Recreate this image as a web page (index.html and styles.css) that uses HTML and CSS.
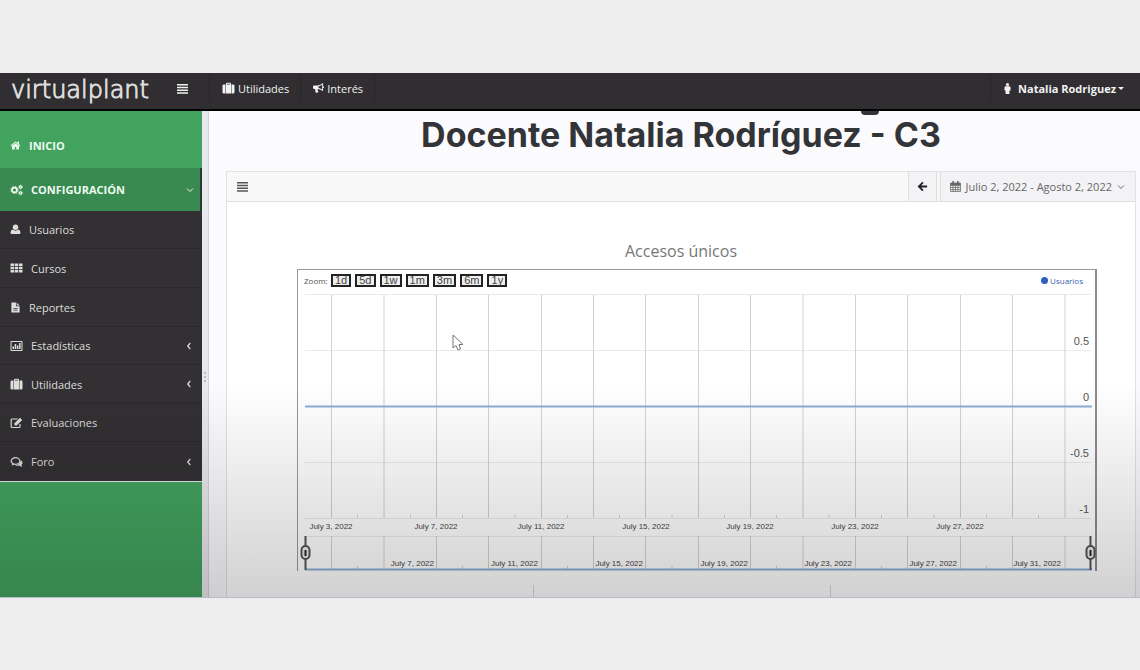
FILE: index.html
```html
<!DOCTYPE html>
<html lang="es">
<head>
<meta charset="utf-8">
<title>Virtualplant</title>
<link rel="stylesheet" href="styles.css">
</head>
<body>
<svg class="defs" aria-hidden="true">
  <symbol id="bars" viewBox="0 0 12 12"><path d="M0 1h12v1.600H0zM0 4h12v1.600H0zM0 7h12v1.600H0zM0 10h12v1.600H0z"/></symbol>
  <symbol id="case" viewBox="0 0 12 12"><path d="M3.500 2.500V1.700Q3.500.7 4.500.7h3q1 0 1 1v.8H9v9H3v-9zm1 0h3v-.8h-3zM2.500 2.500v9H1.300Q0 11.500 0 10.200V3.800Q0 2.500 1.300 2.500zM9.500 2.500h1.200q1.300 0 1.300 1.300v6.400q0 1.300-1.300 1.300H9.500z"/></symbol>
  <symbol id="horn" viewBox="0 0 12 12"><path d="M11 0v3.500q1 0 1 1t-1 1V9Q8.500 6.800 5.500 6.500q-1 .6-.3 1.500-.4.700.8 1.700-.3.900-1.700.9-1.500 0-1.500-.5-.6-1.800-.3-3.600H1.300Q0 6.500 0 5.200V4Q0 2.700 1.300 2.700H5Q8 2.700 11 0zm-1 2Q8 3.500 6 3.700v1.800q2 .2 4 1.700z" fill-rule="evenodd"/></symbol>
  <symbol id="male" viewBox="0 0 12 12"><circle cx="6" cy="1.700" r="1.700"/><path d="M4.200 3.600h3.600q1.500 0 1.500 1.500v3H8.100V12H3.900V8.100H2.700v-3q0-1.500 1.500-1.500z"/></symbol>
  <symbol id="home" viewBox="0 0 1792 1792"><path d="M1472 992v480q0 26-19 45t-45 19h-384v-384h-256v384h-384q-26 0-45-19t-19-45v-480q0-1 .5-3t.5-3l575-474 575 474q1 2 1 6zm223-69l-62 74q-8 9-21 11h-3q-13 0-21-7l-692-577-692 577q-12 8-24 7-13-2-21-11l-62-74q-8-10-7-23.500t11-21.500l719-599q32-26 76-26t76 26l244 204v-195q0-14 9-23t23-9h192q14 0 23 9t9 23v408l219 182q10 8 11 21.500t-7 23.500z"/></symbol>
  <symbol id="gears" viewBox="0 0 12 12"><g fill="none" stroke="currentColor"><circle cx="4" cy="6" r="2.400" stroke-width="1.700"/><circle cx="4" cy="6" r="3.600" stroke-width="1" stroke-dasharray="1.400 1.430"/><circle cx="10" cy="3" r="1.200" stroke-width="1.200"/><circle cx="10" cy="9" r="1.200" stroke-width="1.200"/><circle cx="10" cy="3" r="2" stroke-width=".6" stroke-dasharray="1 1"/><circle cx="10" cy="9" r="2" stroke-width=".6" stroke-dasharray="1 1"/></g></symbol>
  <symbol id="user" viewBox="0 0 12 12"><circle cx="6" cy="3.500" r="3"/><path d="M3 6Q6 8.500 9 6q2.500.5 2.500 3.500 0 1.500-1.500 1.500H2Q.5 11 .5 9.500.5 6.500 3 6z"/></symbol>
  <symbol id="grid" viewBox="0 0 12 12"><path d="M0 1.500h3.500V4H0zM4.200 1.500h3.500V4H4.200zM8.500 1.500H12V4H8.500zM0 4.800h3.500v2.500H0zM4.200 4.800h3.500v2.500H4.200zM8.500 4.800H12v2.500H8.500zM0 8h3.500v2.500H0zM4.200 8h3.500v2.500H4.200zM8.500 8H12v2.500H8.500z"/></symbol>
  <symbol id="file" viewBox="0 0 12 12"><path fill-rule="evenodd" d="M1.500.5h5v4H10.500v7h-9zm5.800 0L10.500 3.700H7.300zM3.700 6.500v.8h4.600v-.8zm0 2v.8h4.600v-.8z"/></symbol>
  <symbol id="chart" viewBox="0 0 12 12"><path fill-rule="evenodd" d="M.8 1h10.400q.8 0 .8.800v8.400q0 .8-.8.800H.8q-.8 0-.8-.8V1.800Q0 1 .8 1zM1 2v8h10V2zm1 4.500h1.500V9H2zM4.200 4h1.500v5H4.200zM6.400 5.500h1.500V9H6.400zM8.600 3h1.500v6H8.600z"/></symbol>
  <symbol id="edit" viewBox="0 0 12 12"><path d="M9.500 7v2.500q0 1-1 1H1.700q-1 0-1-1V3q0-1 1-1h5.500" fill="none" stroke="currentColor" stroke-width="1.200"/><path d="M4 8.500V6.200L9.500.8l2.200 2.300L6.200 8.500z"/></symbol>
  <symbol id="chat" viewBox="0 0 12 12"><ellipse cx="5" cy="5" rx="4.300" ry="3.300" fill="none" stroke="currentColor" stroke-width="1.200"/><path d="M2 7.500 1 9.700 4 8.500zM10.300 4q1.700 1.400 1.700 2.700 0 1.200-1 2 .1 1.300.8 2-1.700 0-2.600-1-2.500.5-4.500-.7 5.200 0 5.600-5z"/></symbol>
  <symbol id="down" viewBox="0 0 8 8"><path d="M1 2.500 4 5.500l3-3" fill="none" stroke="currentColor"/></symbol>
  <symbol id="left" viewBox="0 0 8 8"><path d="M5.300 1 2.700 4l2.600 3" fill="none" stroke="currentColor" stroke-width="1.200"/></symbol>
  <symbol id="back" viewBox="0 0 12 12"><path d="M6.500 1.500 2 6l4.500 4.500M2.500 6H11" fill="none" stroke="currentColor" stroke-width="2"/></symbol>
  <symbol id="cal" viewBox="0 0 12 12"><path d="M.5 2.500h11v9H.5zM.5 5h11M.5 7.200h11M.5 9.400h11M3.300 5v6.500M6 5v6.500M8.700 5v6.500" fill="none" stroke="currentColor" stroke-width=".8"/><path d="M.5 2h11v2.500H.5zM2.500 0h1.700v3H2.500zM7.800 0h1.700v3H7.800z"/></symbol>
</svg>
<div class="app">
  <header class="topbar">
    <div class="brand">
      <span class="logo">virtualplant</span>
      <button class="menu-btn" aria-label="Menú"><svg class="icon"><use href="#bars"/></svg></button>
    </div>
    <nav class="topnav">
      <a href="#"><svg class="icon wide"><use href="#case"/></svg>Utilidades</a>
      <a href="#"><svg class="icon"><use href="#horn"/></svg>Interés</a>
    </nav>
    <button class="account"><svg class="icon"><use href="#male"/></svg>Natalia Rodriguez<span class="caret"></span></button>
  </header>
  <div class="columns">
    <nav class="sidebar">
      <a class="primary home" href="#"><svg class="icon"><use href="#home"/></svg>INICIO</a>
      <a class="primary active" href="#"><svg class="icon wide"><use href="#gears"/></svg>CONFIGURACIÓN<svg class="arrow"><use href="#down"/></svg></a>
      <div class="submenu">
        <a href="#"><svg class="icon"><use href="#user"/></svg>Usuarios</a>
        <a href="#"><svg class="icon wide"><use href="#grid"/></svg>Cursos</a>
        <a href="#"><svg class="icon"><use href="#file"/></svg>Reportes</a>
        <a href="#"><svg class="icon wide"><use href="#chart"/></svg>Estadísticas<svg class="arrow"><use href="#left"/></svg></a>
        <a href="#"><svg class="icon wide"><use href="#case"/></svg>Utilidades<svg class="arrow"><use href="#left"/></svg></a>
        <a href="#"><svg class="icon wide"><use href="#edit"/></svg>Evaluaciones</a>
        <a href="#"><svg class="icon wide"><use href="#chat"/></svg>Foro<svg class="arrow"><use href="#left"/></svg></a>
      </div>
    </nav>
    <div class="splitter"><i></i><i></i><i></i></div>
    <main class="main">
      <span class="descender"></span>
      <h1>Docente Natalia Rodríguez - C3</h1>
      <section class="panel">
        <div class="toolbar">
          <button class="list-btn" aria-label="Opciones"><svg class="icon"><use href="#bars"/></svg></button>
          <button class="back-btn" aria-label="Volver"><svg class="icon"><use href="#back"/></svg></button>
          <button class="range-btn"><svg class="icon"><use href="#cal"/></svg>Julio 2, 2022 - Agosto 2, 2022<svg class="arrow"><use href="#down"/></svg></button>
        </div>
        <h2>Accesos únicos</h2>
        <div class="chart">
          <div class="chart-head">
            <span class="zoom">Zoom:</span>
            <button>1d</button><button>5d</button><button>1w</button><button>1m</button><button>3m</button><button>6m</button><button>1y</button>
            <span class="legend"><i></i>Usuarios</span>
          </div>
          <svg class="plot" viewBox="0 0 797 278">
            <path class="hline" d="M7 1.500h786M7 57.500h786M7 169.500h786M7 225.500h786M7 243.500h786"/>
            <path class="vline" d="M33.500 2v223M86 2v223M138.500 2v223M190.500 2v223M243.500 2v223M295.500 2v223M347.500 2v223M400.500 2v223M452.500 2v223M505 2v223M557.500 2v223M609.500 2v223M662.500 2v223M714.500 2v223M767 2v223"/>
            <path class="vline" d="M33.500 243v33M86 243v33M138.500 243v33M190.500 243v33M243.500 243v33M295.500 243v33M347.500 243v33M400.500 243v33M452.500 243v33M505 243v33M557.500 243v33M609.500 243v33M662.500 243v33M714.500 243v33M767 243v33"/>
            <path class="vline" d="M59.500 222v3M112.500 222v3M164.500 222v3M217 222v3M269.500 222v3M321.500 222v3M374 222v3M426.500 222v3M478.500 222v3M531 222v3M583.500 222v3M636 222v3M688.500 222v3M740.500 222v3M59.500 273v3M164.500 273v3M269.500 273v3M374 273v3M478.500 273v3M583.500 273v3M688.500 273v3"/>
            <path class="series" d="M7 113.500h787M7 276.500h787"/>
            <g class="values"><text x="791" y="52">0.5</text><text x="791" y="108">0</text><text x="791" y="164">-0.5</text><text x="791" y="220">-1</text></g>
            <g class="dates"><text x="33" y="236">July 3, 2022</text><text x="138" y="236">July 7, 2022</text><text x="243" y="236">July 11, 2022</text><text x="348" y="236">July 15, 2022</text><text x="452" y="236">July 19, 2022</text><text x="557" y="236">July 23, 2022</text><text x="662" y="236">July 27, 2022</text></g>
            <g class="dates overview"><text x="136" y="273">July 7, 2022</text><text x="240" y="273">July 11, 2022</text><text x="345" y="273">July 15, 2022</text><text x="450" y="273">July 19, 2022</text><text x="554" y="273">July 23, 2022</text><text x="659" y="273">July 27, 2022</text><text x="763" y="273">July 31, 2022</text></g>
            <g class="handles"><path d="M7.500 243v34M792.500 243v34"/><rect x="3.500" y="253" width="8" height="13" rx="4"/><rect x="788.500" y="253" width="8" height="13" rx="4"/><path class="grip" d="M7.500 257v6M792.500 257v6"/></g>
          </svg>
        </div>
        <div class="stats"><div></div><div></div><div></div></div>
      </section>
    </main>
  </div>
  <div class="shade"></div>
  <svg class="cursor" viewBox="0 0 12 18"><path d="M1 1v13l3-2.500L6 16l2.500-1L7 10.500h4z"/></svg>
</div>
</body>
</html>
```
FILE: styles.css
```css
* { box-sizing: border-box; }
body {
  margin: 0;
  padding: 73px 0 72px;
  background: #eee;
  font-family: "Open Sans", "Noto Sans", sans-serif;
  font-size: 11px;
  color: #555;
}
button { margin: 0; padding: 0; border: 0; background: none; font: inherit; color: inherit; }
a { color: inherit; text-decoration: none; }
.defs { position: absolute; width: 0; height: 0; }
.icon { width: 11px; height: 11px; fill: currentColor; flex: none; }
.wide { width: 13px; height: 12px; }
.arrow { width: 8px; height: 8px; margin-left: auto; flex: none; }
.app { position: relative; overflow: hidden; border-bottom: 1px solid #b5bcc8; }

.topbar {
  display: flex;
  height: 38px;
  padding-bottom: 6px;
  background: #302e30;
  border-bottom: 2px solid #000;
  color: #f2f2f2;
}
.brand { display: flex; align-items: center; width: 209px; padding-left: 11px; }
.logo {
  width: 166px;
  padding-top: 4px;
  font-family: "DejaVu Sans", sans-serif;
  font-weight: 200;
  font-size: 24px;
  line-height: 28px;
  color: #ddd;
  -webkit-text-stroke: 1px #ddd;
}
.menu-btn { display: flex; }
.topnav { display: flex; }
.topnav a { display: flex; align-items: center; gap: 3px; padding: 0 11px 0 12px; border-left: 1px solid #282628; }
.topnav a:last-child { border-right: 1px solid #282628; }
.account { display: flex; align-items: center; gap: 5px; margin-left: auto; padding: 0 16px 0 11px; border-left: 1px solid #282628; font-weight: 700; }
.caret { border: 3px solid transparent; border-top-color: #eee; border-bottom: 0; margin-left: -3px; }

.columns { display: flex; }
.sidebar { width: 202px; background: #42a35f; color: #ddd; flex: none; }
.sidebar a { display: flex; align-items: center; gap: 8px; padding: 0 9px 0 10px; }
.sidebar .primary { color: #eefbf0; font-weight: 700; }
.sidebar .home { height: 57px; padding-top: 11px; }
.sidebar .active { height: 43px; background: #388a50; border-right: 2px solid #2c3a30; padding-right: 6px; }
.submenu { display: grid; grid-template-rows: 38px 39px 39px 38px 39px 38px 39px; background: #323032; border-bottom: 1px solid #dfe8e0; }
.submenu a { border-bottom: 1px solid #2b292b; }
.submenu a:last-child { border-bottom: 0; }

.splitter { display: flex; flex-direction: column; align-items: center; justify-content: center; gap: 2px; width: 7px; padding-top: 46px; background: #e9e8ec; border-right: 1px solid #d3d2d6; flex: none; }
.splitter i { width: 2px; height: 2px; background: #bbb; }

.main { position: relative; flex: 1; min-width: 0; padding: 0 4px 0 17px; background: #fbfafd; }
.descender { position: absolute; top: 0; left: 70%; width: 18px; height: 4px; border-radius: 0 0 9px 9px; background: #333438; }
h1 { margin: 0; height: 60px; font-family: Inter, sans-serif; font-size: 34px; line-height: 47px; font-weight: 700; text-align: center; color: #333438; }
.panel { background: #fff; border: 1px solid #e2e2e4; border-bottom: 0; }
.toolbar { display: flex; height: 30px; background: #f8f8f9; border-bottom: 1px solid #dedee0; }
.toolbar button { display: flex; align-items: center; }
.list-btn { padding: 0 10px; }
.back-btn { width: 29px; justify-content: center; margin-left: auto; background: #f3f3f6; border: solid #dedee0; border-width: 0 1px; color: #222; }
.range-btn { margin-left: 3px; padding: 0 10px 0 9px; gap: 5px; border-left: 1px solid #dedee0; background: #f3f3f6; color: #666; }
h2 { margin: 37px 0 6px; font-size: 16px; line-height: 24px; font-weight: 400; text-align: center; color: #777; }
.chart { margin: 0 38px 0 70px; border: 1px solid #999; border-right: 2px solid #8d8b90; border-bottom: 0; }
.chart-head { display: flex; align-items: center; gap: 4px; height: 23px; padding: 0 12px 3px 6px; }
.zoom { width: 23px; font-size: 8px; }
.chart-head button { height: 13px; padding: 0 2px; border: 2px solid #222; font-family: "Liberation Sans", sans-serif; font-size: 11px; line-height: 9px; min-width: 20px; color: #444; background: #eee; }
.legend { display: flex; align-items: center; gap: 2px; margin-left: auto; font-size: 8px; color: #3a5fb5; }
.legend i { width: 7px; height: 7px; border-radius: 50%; background: #2f5dc0; }
.plot { display: block; width: 100%; height: auto; overflow: visible; font-family: "Liberation Sans", sans-serif; }
.hline { stroke: #ebe9ec; }
.vline { stroke: #d3d1d4; }
.series { stroke: #8aadd4; stroke-width: 2; }
.values { font-size: 11px; text-anchor: end; fill: #555; }
.dates { font-size: 8px; text-anchor: middle; fill: #444; }
.overview { text-anchor: end; }
.handles { fill: #eee; stroke: #555; stroke-width: 2; }
.grip { stroke: #222; }
.stats { display: grid; grid-template-columns: 306px 297px 1fr; margin-top: 14px; }
.stats div { height: 12px; }
.stats div + div { border-left: 1px solid #d8d8d8; }

.shade { position: absolute; inset: 310px 0 0; background: linear-gradient(rgba(0,0,0,0), rgba(0,0,0,.09) 50%, rgba(0,0,0,.18)); pointer-events: none; }
.cursor { position: absolute; left: 452px; top: 261px; width: 12px; height: 18px; fill: #fff; stroke: #777; }
```
